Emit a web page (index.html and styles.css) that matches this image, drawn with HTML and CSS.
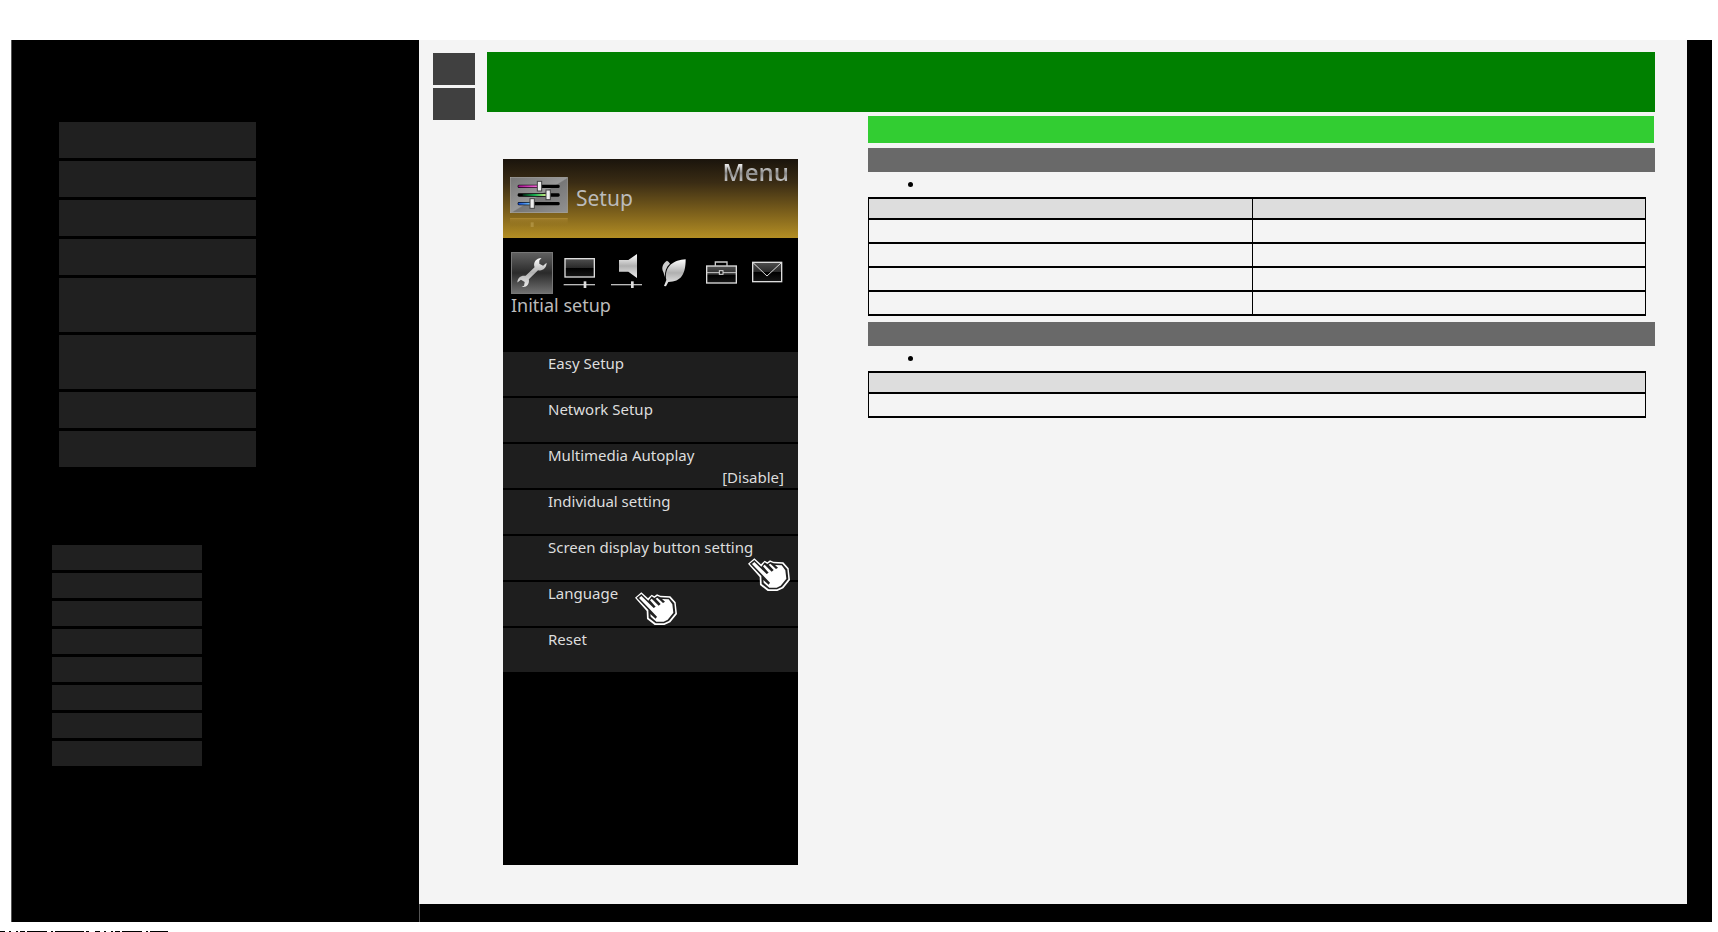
FILE: index.html
```
<!DOCTYPE html>
<html lang="en">
<head>
    <meta charset="UTF-8">
    <title>Setup</title>
    <link rel="stylesheet" href="styles.css">
</head>
<body>
    <div class="wrap">
        <nav class="side">
            <ul class="chapters">
                <li></li>
                <li></li>
                <li></li>
                <li></li>
                <li class="tall"></li>
                <li class="tall"></li>
                <li></li>
                <li></li>
            </ul>
            <ul class="links">
                <li></li>
                <li></li>
                <li></li>
                <li></li>
                <li></li>
                <li></li>
                <li></li>
                <li></li>
            </ul>
        </nav>
        <div class="frame">
        <main class="page">
            <div class="pager">
                <button type="button"></button>
                <button type="button"></button>
            </div>
            <div class="content">
                <div class="title"></div>
                <div class="columns">
                    <div class="menu">
                        <div class="menu-head">
                            <svg class="setup-icon" width="58" height="52" viewBox="0 0 174 156">
                                <defs>
                                    <linearGradient id="metal" x1="0" y1="0" x2="1" y2="1">
                                        <stop offset="0" stop-color="#777"/>
                                        <stop offset=".5" stop-color="#999"/>
                                        <stop offset=".52" stop-color="#777"/>
                                        <stop offset="1" stop-color="#929292"/>
                                    </linearGradient>
                                    <linearGradient id="pink"><stop offset="0" stop-color="#a0128c"/><stop offset="1" stop-color="#ff6fe0"/></linearGradient>
                                    <linearGradient id="green"><stop offset="0" stop-color="#021"/><stop offset=".5" stop-color="#14b050"/><stop offset="1" stop-color="#e4f48a"/></linearGradient>
                                    <linearGradient id="blue"><stop offset="0" stop-color="#1550d8"/><stop offset="1" stop-color="#7fd0ff"/></linearGradient>
                                    <linearGradient id="mirror" x1="0" y1="0" x2="0" y2="1"><stop offset="0" stop-color="#b08c34"/><stop offset="1" stop-color="#8a6c1e" stop-opacity="0"/></linearGradient>
                                </defs>
                                <rect x="1" y="1" width="171" height="106" fill="url(#metal)" stroke="#aaa" stroke-width="2"/>
                                <rect x="23" y="23" width="126" height="10" rx="4" fill="#000"/>
                                <rect x="23" y="49" width="126" height="10" rx="4" fill="#000"/>
                                <rect x="23" y="75" width="126" height="10" rx="4" fill="#000"/>
                                <rect x="25" y="25" width="62" height="6" fill="url(#pink)"/>
                                <rect x="38" y="51" width="74" height="6" fill="url(#green)"/>
                                <rect x="25" y="77" width="40" height="6" fill="url(#blue)"/>
                                <g fill="#eee" stroke="#444" stroke-width="3">
                                    <rect x="82" y="13" width="13" height="29"/>
                                    <rect x="108" y="39" width="13" height="29"/>
                                    <rect x="60" y="65" width="13" height="29"/>
                                </g>
                                <rect x="0" y="123" width="173" height="28" fill="url(#mirror)" opacity=".6"/>
                                <path d="M0 125H173" stroke="#a98634" stroke-width="3"/>
                                <rect x="62" y="136" width="9" height="14" fill="#b69a4c" opacity=".7"/>
                            </svg>
                            <h1>Setup</h1>
                            <span class="brand">Menu</span>
                        </div>
                        <div class="tabs">
                            <button type="button" class="active">
                                <svg viewBox="0 0 126 126"><defs><linearGradient id="silver" x1="0" y1="0" x2="0" y2="1"><stop offset="0" stop-color="#fff"/><stop offset=".5" stop-color="#b0b0b0"/><stop offset="1" stop-color="#eee"/></linearGradient><linearGradient id="glass" x1="0" y1="0" x2="0" y2="1"><stop offset="0" stop-color="#505050"/><stop offset=".5" stop-color="#292929"/><stop offset=".52" stop-color="#000"/><stop offset="1" stop-color="#151515"/></linearGradient></defs><path fill="url(#silver)" d="M93 16C76 17 66 29 71 45L43 72C30 69 17 77 17 93L28 84L40 91L38 103L30 107C46 110 56 98 53 83L82 54C95 58 109 49 109 31L98 40L86 34L86 24Z"/></svg>
                            </button>
                            <button type="button">
                                <svg viewBox="0 0 126 126"><rect x="21" y="20" width="88" height="55" fill="url(#glass)" stroke="#ddd" stroke-width="4"/><path d="M17 98H111" stroke="#bbb" stroke-width="4"/><rect x="77" y="88" width="8" height="20" fill="#ddd"/></svg>
                            </button>
                            <button type="button">
                                <svg viewBox="0 0 126 126"><path d="M42 24H70L96 6V78L70 59H42Z" fill="url(#silver)"/><path d="M18 98H111" stroke="#bbb" stroke-width="4"/><rect x="78" y="88" width="8" height="20" fill="#ddd"/></svg>
                            </button>
                            <button type="button">
                                <svg viewBox="0 0 126 126"><path d="M45 26C33 34 27 47 34 60L39 75C38 58 43 44 54 35Q51 29 45 26Z" fill="#ccc"/><path d="M101 22C66 24 36 42 43 84L36 102L42 103L49 90C88 90 101 66 101 22Z" fill="url(#silver)"/></svg>
                            </button>
                            <button type="button">
                                <svg viewBox="0 0 126 126"><path d="M49 41V30H84V41" fill="none" stroke="#ccc" stroke-width="4"/><rect x="23" y="42" width="89" height="51" fill="url(#glass)" stroke="#ddd" stroke-width="4"/><path d="M23 62H112" stroke="#ccc" stroke-width="3"/><rect x="61" y="56" width="11" height="11" fill="#222" stroke="#ddd" stroke-width="3"/></svg>
                            </button>
                            <button type="button">
                                <svg viewBox="0 0 126 126"><rect x="20" y="31" width="87" height="58" fill="url(#glass)" stroke="#ddd" stroke-width="4"/><path d="M21 32L63 72L106 32" fill="none" stroke="#ddd" stroke-width="3"/></svg>
                            </button>
                        </div>
                        <h2>Initial setup</h2>
                        <ul class="items">
                            <li>Easy Setup</li>
                            <li>Network Setup</li>
                            <li>Multimedia Autoplay <span>[Disable]</span></li>
                            <li>Individual setting</li>
                            <li>Screen display button setting</li>
                            <li>Language</li>
                            <li>Reset</li>
                        </ul>
                        <svg class="hand hand-display" viewBox="0 0 126 99">
                            <g id="hand">
                                <path fill="#fff" d="M0 17L19 1L39 19L50 8L58 13L66 7L76 11L106 13L122 31L126 66L106 91L88 99L59 99L36 81L35 57Z"/>
                                <path fill="#222" d="M5 17L19 6L40 26L50 13L58 18L67 12L77 16L103 17L118 34L121 64L102 87L87 94L62 94L41 78L40 54Z"/>
                                <path fill="#fff" d="M12 18L19 12L56 48L62 44L45 25L50 20L71 41L77 36L62 20L67 17L84 33L90 29L81 21L101 22L112 37L115 62L98 83L86 89L64 89L47 74L46 66L62 80L66 74L46 53Z"/>
                            </g>
                        </svg>
                        <svg class="hand hand-language" viewBox="0 0 126 99"><use href="#hand"/></svg>
                    </div>
                    <div class="text">
                        <div class="bar"></div>
                        <div class="sub"></div>
                        <ul class="note"><li></li></ul>
                        <table>
                            <tr><th></th><th></th></tr>
                            <tr><td></td><td></td></tr>
                            <tr><td></td><td></td></tr>
                            <tr><td></td><td></td></tr>
                            <tr><td></td><td></td></tr>
                        </table>
                        <div class="sub"></div>
                        <ul class="note"><li></li></ul>
                        <table>
                            <tr><th></th></tr>
                            <tr><td></td></tr>
                        </table>
                    </div>
                </div>
            </div>
        </main>
        </div>
    </div>
    <svg class="rule" width="168" height="1"><path d="M0 .5H168" stroke="#000" stroke-dasharray="5 4 2 5 2 2 5 2 20 4 2 2 29 2 3 6"/></svg>
</body>
</html>
```
FILE: styles.css
```
*{margin: 0;padding: 0;box-sizing: border-box;}
ul{list-style: none;}
button{border: 0;}
body{padding: 40px 6px 0 11px;background: #fff;font-family: "Noto Sans","Liberation Sans",sans-serif;overflow: hidden;}
.wrap{display: flex;background: #000;border-left: 1px solid #555;}

.side{width: 407px;flex: none;padding: 82px 40px 155px;}
.side ul{display: flex;flex-direction: column;gap: 3px;}
.side li{background: #202020;}
.chapters{width: 197px;margin: 0 7px 78px;}
.chapters li{height: 36px;}
.chapters .tall{height: 54px;}
.links{width: 150px;}
.links li{height: 25px;}

.frame{flex: 1;display: flex;border-left: 1px solid #555;}
.page{flex: 1;display: flex;gap: 12px;align-items: flex-start;padding: 12px 32px 39px 14px;background: #f4f4f4;margin: 0 25px 18px -1px;}
.pager{display: flex;flex-direction: column;gap: 3px;padding-top: 1px;}
.pager button{width: 42px;height: 32px;background: #404040;}
.content{flex: 1;}
.title{height: 60px;background: green;}
.columns{display: grid;grid-template-columns: 381px 1fr;padding-top: 4px;}

.menu{width: 295px;height: 706px;margin: 43px 0 0 16px;background: #000;position: relative;}
.menu-head{height: 79px;display: flex;align-items: flex-start;gap: 8px;padding: 0 9px 0 7px;background: linear-gradient(#1a140c,#3a2c14 30%,#80631c 70%,#b38e24);}
.setup-icon{margin-top: 18px;}
.menu-head h1{margin-top: 21px;font-size: 21px;line-height: 36px;font-weight: 400;color: #bbb;}
.brand{margin-left: auto;font: 600 24px/26px "Open Sans",sans-serif;color: transparent;background: linear-gradient(#eee 20%,#888 55%,#bbb 80%);-webkit-background-clip: text;background-clip: text;}
.tabs{display: flex;gap: 5px;padding: 14px 8px 0;}
.tabs button{width: 42px;height: 42px;background: none;}
.tabs .active{background: linear-gradient(#606060,#2a2a2a 50%,#707070);border: 1px solid #777;}
.tabs svg{display: block;width: 100%;}
.menu h2{height: 58px;padding-left: 8px;font-size: 18px;line-height: 22px;font-weight: 400;color: #bbb;}
.items li{height: 46px;padding: 0 14px 0 45px;font-size: 15px;line-height: 22px;color: #ddd;background: #1e1e1e;border-bottom: 2px solid #000;}
.items span{display: block;text-align: right;}
.hand{position: absolute;width: 42px;height: 33px;}
.hand-display{left: 245px;top: 399px;}
.hand-language{left: 132px;top: 433px;}

.bar{height: 27px;margin: 0 1px 5px 0;background: limegreen;}
.sub{height: 24px;background: #696969;}
.note{height: 25px;padding-left: 56px;list-style: disc;font: 16px/24px "Liberation Serif",serif;}
table{width: calc(100% - 9px);table-layout: fixed;border-collapse: collapse;margin-bottom: 6px;}
th,td{height: 24px;border: solid #000;border-width: 2px 1px;}
th{height: 21px;background: #ddd;}
th:first-child{width: 384px;}

.rule{display: block;margin: 9px 0 0 -11px;}
```
